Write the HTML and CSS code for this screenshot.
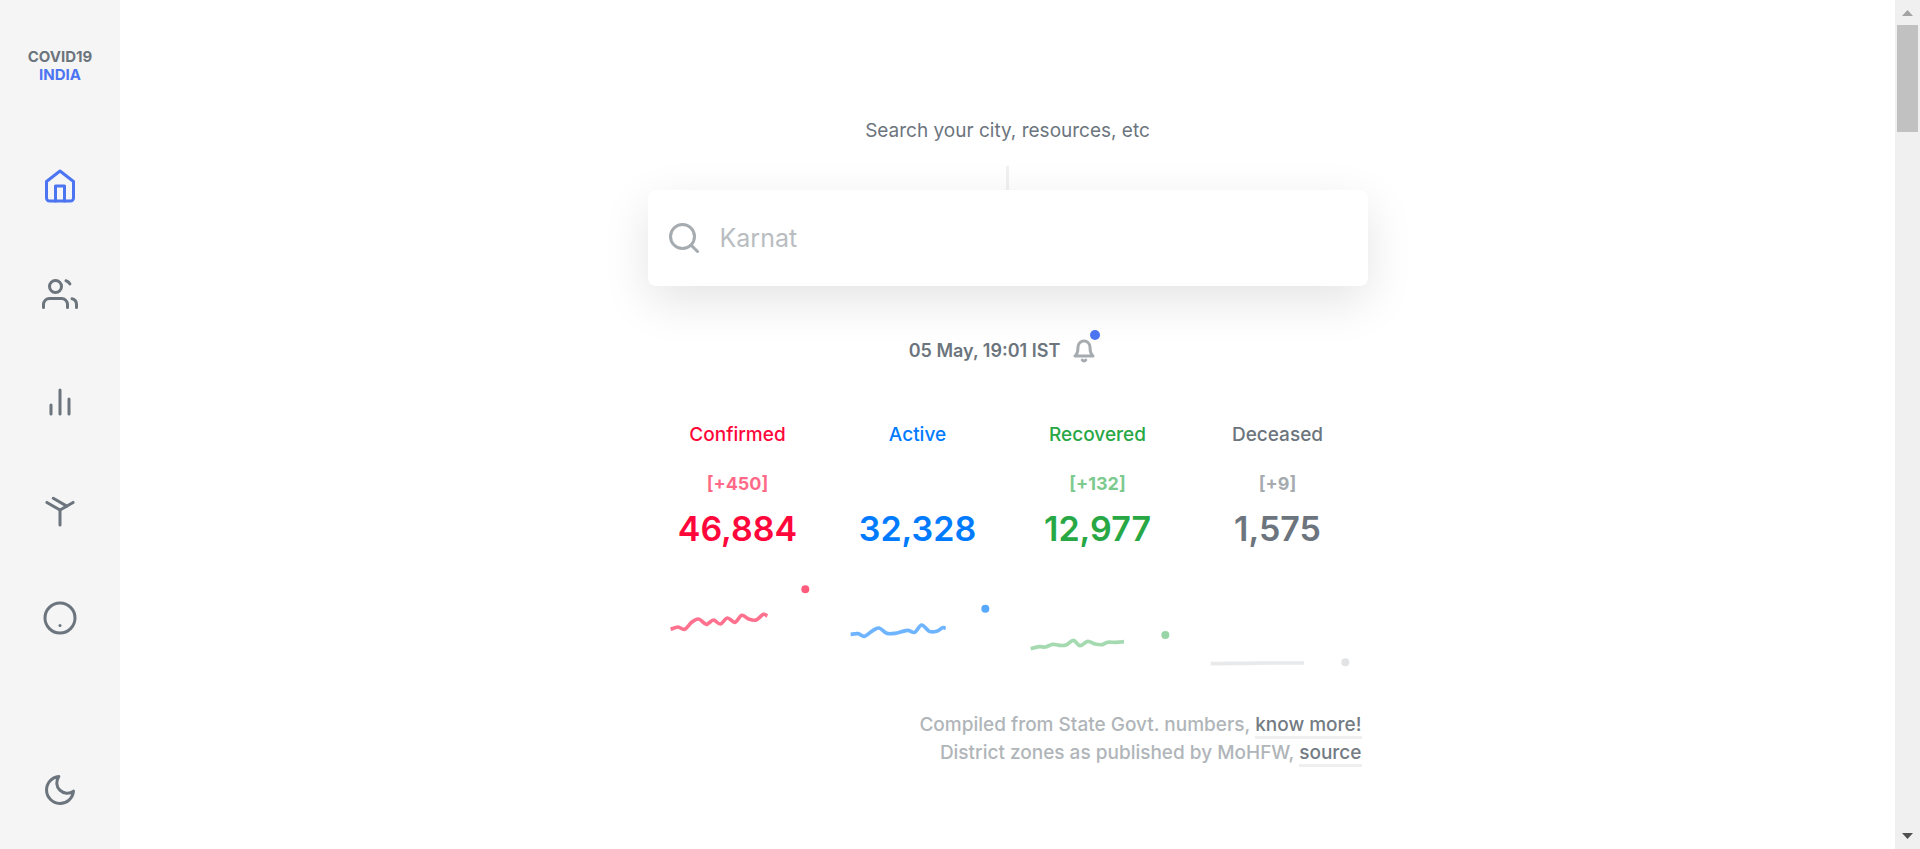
FILE: index.html
```html
<!DOCTYPE html>
<html lang="en">
<head>
<meta charset="utf-8">
<title>COVID19 INDIA</title>
<link rel="stylesheet" href="styles.css">
</head>
<body>
<div class="app">
  <nav class="sidebar" aria-label="Main">
    <a class="logo" href="#">COVID19<span class="logo-accent">INDIA</span></a>
    <div class="nav-links">
      <a class="nav-link active" href="#" aria-label="Home"><svg class="icon" viewBox="0 0 24 24"><path d="M3 9l9-7 9 7v11a2 2 0 0 1-2 2H5a2 2 0 0 1-2-2z"/><path d="M9 22V12h6v10"/></svg></a>
      <a class="nav-link" href="#" aria-label="Demographics"><svg class="icon" viewBox="0 0 24 24"><path d="M17 21v-2a4 4 0 0 0-4-4H5a4 4 0 0 0-4 4v2"/><circle cx="9" cy="7" r="4"/><path d="M23 21v-2a4 4 0 0 0-3-3.87"/><path d="M16 3.130a4 4 0 0 1 2.600 2.200"/></svg></a>
      <a class="nav-link" href="#" aria-label="Deep dive"><svg class="icon" viewBox="0 0 24 24"><path d="M18 20V10M12 20V4M6 20v-6"/></svg></a>
      <a class="nav-link" href="#" aria-label="Essentials"><svg class="icon" viewBox="0 0 24 24"><path d="M16.5 9.4l-9-5.19"/><path d="M3.27 6.96L12 12.01l8.73-5.05"/><path d="M12 22.08V12"/></svg></a>
      <a class="nav-link" href="#" aria-label="About"><svg class="icon" viewBox="0 0 24 24"><circle cx="12" cy="12" r="10"/><path d="M12 17h.01"/></svg></a>
    </div>
    <button class="theme-toggle" type="button" aria-label="Dark mode"><svg class="icon" viewBox="0 0 24 24"><path d="M21 12.79A9 9 0 1 1 11.21 3 7 7 0 0 0 21 12.79z"/></svg></button>
  </nav>

  <main class="main">
    <div class="content">
      <div class="search">
        <label class="search-label" for="search">Search your city, resources, etc</label>
        <div class="search-line"></div>
        <div class="search-box">
          <svg class="icon search-icon" viewBox="0 0 24 24"><circle cx="11" cy="11" r="8"/><path d="M21 21l-4.35-4.35"/></svg>
          <input class="search-input" id="search" type="text" placeholder="Karnat">
        </div>
      </div>

      <div class="updated">
        <span>05 May, 19:01 IST</span>
        <button class="bell" type="button" aria-label="Updates"><svg class="icon bell-icon" viewBox="0 0 24 24"><path d="M18 8A6 6 0 0 0 6 8c0 7-3 9-3 9h18s-3-2-3-9"/><path d="M13.73 21a2 2 0 0 1-3.46 0"/></svg><span class="bell-dot"></span></button>
      </div>

      <div class="stats">
        <section class="stat confirmed"><h2 class="stat-name">Confirmed</h2><p class="stat-delta">[+450]</p><p class="stat-total">46,884</p>
          <svg class="spark" viewBox="0 0 540 330" data-points="68,181 90,174 110,181 131,160 152,150 175,166 196,153 217,165 238,147 261,160 281,139 302,150 324,153 346,136 358,141"><path class="spark-line"/><circle class="spark-dot" cx="472" cy="61" r="12"/></svg></section>
        <section class="stat active-cases"><h2 class="stat-name">Active</h2><p class="stat-delta"></p><p class="stat-total">32,328</p>
          <svg class="spark" viewBox="0 0 540 330" data-points="68,196 90,194 109,202 131,187 153,177 176,193 201,193 238,184 260,190 281,168 304,187 326,187 344,176 353,178"><path class="spark-line"/><circle class="spark-dot" cx="472" cy="119" r="12"/></svg></section>
        <section class="stat recovered"><h2 class="stat-name">Recovered</h2><p class="stat-delta">[+132]</p><p class="stat-total">12,977</p>
          <svg class="spark" viewBox="0 0 540 330" data-points="68,239 94,233 112,234 134,226 154,229 174,228 196,214 216,230 239,217 262,225 282,227 298,220 324,220 348,218"><path class="spark-line"/><circle class="spark-dot" cx="472" cy="198" r="12"/></svg></section>
        <section class="stat deceased"><h2 class="stat-name">Deceased</h2><p class="stat-delta">[+9]</p><p class="stat-total">1,575</p>
          <svg class="spark" viewBox="0 0 540 330" data-points="68,284 120,283 180,283 240,282 348,282"><path class="spark-line"/><circle class="spark-dot" cx="472" cy="280" r="12"/></svg></section>
      </div>

      <div class="notes">
        <p class="note">Compiled from State Govt. numbers, <a class="note-link" href="#">know more!</a></p>
        <p class="note">District zones as published by MoHFW, <a class="note-link" href="#">source</a></p>
      </div>
    </div>
  </main>

  <div class="scrollbar" aria-hidden="true">
    <svg class="scroll-arrow up" viewBox="0 0 25 25"><path d="M7 16l5.500-6 5.500 6z"/></svg>
    <div class="scroll-thumb"></div>
    <svg class="scroll-arrow down" viewBox="0 0 25 25"><path d="M7 9l5.500 6 5.500-6z"/></svg>
  </div>
</div>
<script src="script.js"></script>
</body>
</html>
```

FILE: styles.css
```css
* { box-sizing: border-box; }

body {
  margin: 0;
  background: #fff;
  color: #6c757d;
  font-family: Inter, "Liberation Sans", sans-serif;
  font-size: 18px;
  line-height: 24px;
}

h2, p { margin: 0; }

button {
  padding: 0;
  border: 0;
  background: none;
  color: inherit;
  cursor: pointer;
}

.app {
  display: flex;
  height: 100vh;
  overflow: hidden;
}

.icon {
  display: block;
  width: 36px;
  height: 36px;
  fill: none;
  stroke: currentColor;
  stroke-width: 2;
  stroke-linecap: round;
  stroke-linejoin: round;
}

/* Sidebar */
.sidebar {
  display: flex;
  flex: none;
  flex-direction: column;
  align-items: center;
  width: 120px;
  padding: 48px 0 41px;
  background: #f5f5f5;
}

.logo {
  color: #6c757d;
  font-size: 15px;
  font-weight: 700;
  line-height: 18px;
  text-align: center;
  text-decoration: none;
}

.logo-accent {
  display: block;
  color: #4c75f2;
}

.nav-links {
  display: flex;
  flex-direction: column;
  gap: 72px;
  margin-top: 84px;
}

.nav-link { color: #6c757d; }
.nav-link.active { color: #4c75f2; }
.theme-toggle { margin-top: auto; }

/* Main column */
.main {
  display: flex;
  flex: 1;
  justify-content: center;
  padding-top: 119px;
}

.content {
  width: 100%;
  max-width: 720px;
}

.search {
  display: flex;
  flex-direction: column;
  align-items: center;
}

.search-label {
  font-size: 19px;
  font-weight: 400;
}

.search-line {
  width: 3px;
  height: 24px;
  margin-top: 23px;
  background: #f1f1f1;
}

.search-box {
  display: flex;
  align-items: center;
  gap: 18px;
  width: 100%;
  height: 96px;
  padding: 0 18px;
  border-radius: 8px;
  background: #fff;
  box-shadow: 0 15px 48px rgba(0, 0, 0, 0.11);
}

.search-icon { opacity: 0.6; }

.search-input {
  flex: 1;
  padding: 0;
  border: 0;
  outline: 0;
  background: none;
  color: #6c757d;
  font: 400 25px/32px Inter, "Liberation Sans", sans-serif;
}

.search-input::placeholder { color: #b9bdc1; opacity: 1; }

.updated {
  display: flex;
  justify-content: center;
  align-items: center;
  gap: 12px;
  margin-top: 53px;
  padding-right: 10px;
  font-weight: 600;
}

.bell { position: relative; }

.bell-icon {
  width: 24px;
  height: 24px;
  stroke-width: 3;
  opacity: 0.6;
}

.bell-dot {
  position: absolute;
  top: -9px;
  right: -4px;
  width: 10px;
  height: 10px;
  border-radius: 50%;
  background: #4c75f2;
}

/* Totals */
.stats {
  display: grid;
  grid-template-columns: repeat(4, 1fr);
  margin-top: 60px;
  text-align: center;
}

.stat-name {
  font-size: 19px;
  font-weight: 500;
  line-height: 24px;
}

.stat-delta {
  height: 24px;
  margin-top: 25px;
  font-weight: 700;
  opacity: 0.6;
}

.stat-total {
  margin-top: 11px;
  font-size: 34px;
  font-weight: 600;
  line-height: 44px;
}

.spark {
  display: block;
  width: 100%;
  margin-top: 18px;
}

.spark-line {
  fill: none;
  stroke: currentColor;
  stroke-width: 11;
  opacity: 0.57;
}

.spark-dot { fill: currentColor; opacity: 0.66; }

.confirmed { color: #ff073a; }
.active-cases { color: #007bff; }
.recovered { color: #28a745; }
.deceased { color: #6c757d; }
.recovered .spark-line { opacity: 0.42; }
.recovered .spark-dot { opacity: 0.48; }
.deceased .spark-line { opacity: 0.16; }
.deceased .spark-dot { opacity: 0.2; }

.notes {
  margin-top: 32px;
  padding-right: 6px;
  color: #b0b5b9;
  font-size: 19px;
  font-weight: 500;
  line-height: 28px;
  text-align: right;
}

.note-link {
  border-bottom: 3px solid #efefef;
  color: #737b83;
  text-decoration: none;
}

/* Scroll track */
.scrollbar {
  display: flex;
  flex: none;
  flex-direction: column;
  width: 25px;
  background: #f0f0f0;
}

.scroll-arrow { width: 25px; height: 25px; }
.scroll-arrow.up { fill: #a3a3a3; }
.scroll-arrow.down { margin-top: auto; fill: #505050; }

.scroll-thumb {
  height: 107px;
  margin: 0 2px;
  background: #c1c1c1;
}
```

FILE: script.js
```js
// Draws each sparkline as a smooth curve through its points.
document.querySelectorAll('.spark').forEach(function (svg) {
  var pts = svg.dataset.points.split(' ').map(function (p) {
    return p.split(',').map(Number);
  });
  var d = 'M' + pts[0];
  for (var i = 0; i < pts.length - 1; i++) {
    var a = pts[i - 1] || pts[i], b = pts[i], c = pts[i + 1], e = pts[i + 2] || c;
    d += 'C' + [
      b[0] + (c[0] - a[0]) / 6, b[1] + (c[1] - a[1]) / 6,
      c[0] - (e[0] - b[0]) / 6, c[1] - (e[1] - b[1]) / 6,
      c[0], c[1]
    ].join(' ');
  }
  svg.querySelector('.spark-line').setAttribute('d', d);
});
```
